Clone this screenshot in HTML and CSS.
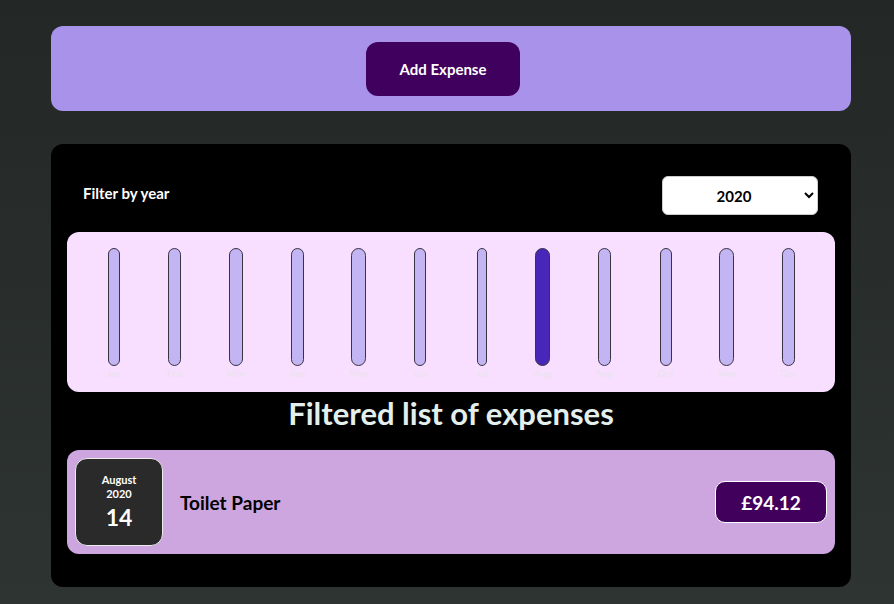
FILE: index.html
```html
<!DOCTYPE html>
<html lang="en">
<head>
<meta charset="utf-8">
<title>Expenses</title>
<link rel="stylesheet" href="styles.css">
</head>
<body>
<div class="app">
  <div class="new-expense">
    <button class="add-btn">Add Expense</button>
  </div>
  <div class="expenses">
    <div class="filter">
      <label class="filter-label">Filter by year</label>
      <select class="filter-select">
        <option>2022</option>
        <option>2021</option>
        <option selected>2020</option>
        <option>2019</option>
      </select>
    </div>
    <div class="chart">
      <div class="col"><div class="bar" style="width:12px"></div><span class="lbl">Jan</span></div>
      <div class="col"><div class="bar" style="width:13px"></div><span class="lbl">Feb</span></div>
      <div class="col"><div class="bar" style="width:14px"></div><span class="lbl">Mar</span></div>
      <div class="col"><div class="bar" style="width:13px"></div><span class="lbl">Apr</span></div>
      <div class="col"><div class="bar" style="width:15px"></div><span class="lbl">May</span></div>
      <div class="col"><div class="bar" style="width:12px"></div><span class="lbl">Jun</span></div>
      <div class="col"><div class="bar" style="width:10px"></div><span class="lbl">Jul</span></div>
      <div class="col"><div class="bar active" style="width:15px"></div><span class="lbl">Aug</span></div>
      <div class="col"><div class="bar" style="width:13px"></div><span class="lbl">Sep</span></div>
      <div class="col"><div class="bar" style="width:12px"></div><span class="lbl">Oct</span></div>
      <div class="col"><div class="bar" style="width:15px"></div><span class="lbl">Nov</span></div>
      <div class="col"><div class="bar" style="width:13px"></div><span class="lbl">Dec</span></div>
    </div>
    <h2 class="list-title">Filtered list of expenses</h2>
    <div class="item">
      <div class="date">
        <div class="month">August</div>
        <div class="year">2020</div>
        <div class="day">14</div>
      </div>
      <h3 class="desc">Toilet Paper</h3>
      <div class="price">£94.12</div>
    </div>
  </div>
</div>
</body>
</html>
```
FILE: styles.css
```css
* { box-sizing: border-box; }
html, body { margin: 0; height: 100%; }
body {
  background: linear-gradient(180deg, #232826 0%, #2e3432 100%);
  font-family: "Lato", "Noto Sans", sans-serif;
}
.app {
  width: 800px;
  margin-left: 51px;
  padding-top: 26px;
}
.new-expense {
  background: #a892ea;
  border-radius: 12px;
  height: 85px;
  padding: 16px 16px 0 0;
  display: flex;
  justify-content: center;
  align-items: flex-start;
}
.add-btn {
  background: #40005d;
  color: #fff;
  border: none;
  border-radius: 12px;
  width: 154px;
  height: 54px;
  font-family: inherit;
  font-weight: 700;
  font-size: 15px;
  cursor: pointer;
}
.expenses {
  margin-top: 33px;
  background: #000;
  border-radius: 12px;
  padding: 32px 16px 33px;
}
.filter {
  display: flex;
  justify-content: space-between;
  align-items: center;
  padding-left: 16px;
  padding-right: 17px;
  margin-bottom: 17px;
}
.filter-label {
  color: #fff;
  font-weight: 700;
  font-size: 15px;
  margin-top: -6px;
}
.filter-select {
  width: 156px;
  height: 39px;
  border-radius: 6px;
  border: 1px solid #ccc;
  background: #fff;
  font-family: inherit;
  font-weight: 700;
  font-size: 15px;
  text-align: center;
  text-align-last: center;
  color: #000;
  padding: 0 8px;
}
.chart {
  background: #f8dfff;
  border-radius: 12px;
  height: 160px;
  padding: 16px 16px 0;
  display: grid;
  grid-template-columns: repeat(12, 1fr);
}
.col {
  display: flex;
  flex-direction: column;
  align-items: center;
}
.bar {
  height: 118px;
  background: #c3b4f3;
  border: 1px solid #3a3340;
  border-radius: 12px;
}
.bar.active { background: #4826b9; }
.lbl {
  margin-top: 1px;
  font-size: 10px;
  font-weight: 700;
  color: #ece2ef;
}
.list-title {
  margin: 1px 0 17px;
  text-align: center;
  color: #e3efed;
  font-size: 31px;
  font-weight: 700;
  line-height: 40px;
}
.item {
  background: #cda6e0;
  border-radius: 12px;
  padding: 8px;
  display: flex;
  align-items: center;
}
.date {
  width: 88px;
  height: 88px;
  background: #2a2a2a;
  border: 1px solid #ececec;
  border-radius: 12px;
  color: #fff;
  display: flex;
  flex-direction: column;
  align-items: center;
  justify-content: center;
  font-weight: 700;
  padding-bottom: 2px;
}
.month { font-size: 11px; line-height: 14px; }
.year { font-size: 11px; line-height: 14px; }
.day { font-size: 23px; line-height: 26px; margin-top: 3px; }
.desc {
  flex: 1;
  margin: 0 0 0 17px;
  font-size: 19px;
  font-weight: 700;
  color: #000;
}
.price {
  width: 112px;
  height: 42px;
  background: #40005b;
  border: 1px solid #fff;
  border-radius: 10px;
  color: #fff;
  font-weight: 700;
  font-size: 19px;
  display: flex;
  align-items: center;
  justify-content: center;
}
```
